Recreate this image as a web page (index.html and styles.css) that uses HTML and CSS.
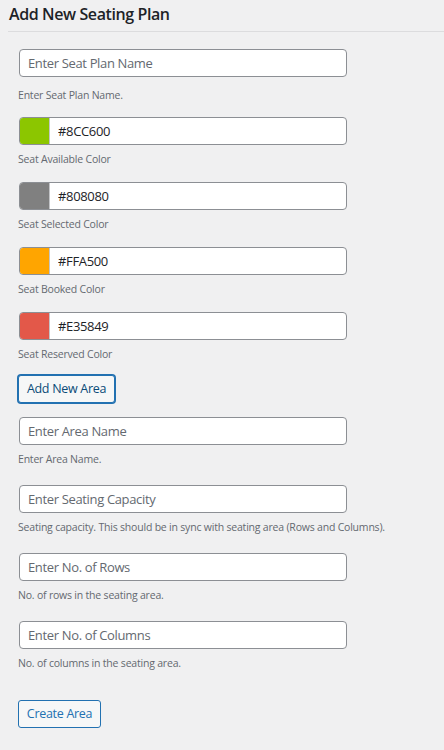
FILE: index.html
```html
<!DOCTYPE html>
<html lang="en">
<head>
<meta charset="utf-8">
<title>Add New Seating Plan</title>
<link rel="stylesheet" href="styles.css">
</head>
<body>
<div class="page">
  <header class="head">
    <h1 class="title">Add New Seating Plan</h1>
  </header>
  <form class="form">
    <div class="field field--first">
      <input class="text" type="text" placeholder="Enter Seat Plan Name">
      <p class="desc desc--first">Enter Seat Plan Name.</p>
    </div>
    <div class="field field--color">
      <div class="color"><span class="swatch" style="background:#8CC600"></span><input class="color-text" type="text" value="#8CC600"></div>
      <p class="desc">Seat Available Color</p>
    </div>
    <div class="field field--color">
      <div class="color"><span class="swatch" style="background:#808080"></span><input class="color-text" type="text" value="#808080"></div>
      <p class="desc">Seat Selected Color</p>
    </div>
    <div class="field field--color">
      <div class="color"><span class="swatch" style="background:#FFA500"></span><input class="color-text" type="text" value="#FFA500"></div>
      <p class="desc">Seat Booked Color</p>
    </div>
    <div class="field field--color field--last-color">
      <div class="color"><span class="swatch" style="background:#E35849"></span><input class="color-text" type="text" value="#E35849"></div>
      <p class="desc">Seat Reserved Color</p>
    </div>
    <button class="btn btn--focus" type="button">Add New Area</button>
    <div class="field field--area">
      <input class="text" type="text" placeholder="Enter Area Name">
      <p class="desc">Enter Area Name.</p>
    </div>
    <div class="field field--area">
      <input class="text" type="text" placeholder="Enter Seating Capacity">
      <p class="desc">Seating capacity. This should be in sync with seating area (Rows and Columns).</p>
    </div>
    <div class="field field--area">
      <input class="text" type="text" placeholder="Enter No. of Rows">
      <p class="desc">No. of rows in the seating area.</p>
    </div>
    <div class="field field--area">
      <input class="text" type="text" placeholder="Enter No. of Columns">
      <p class="desc">No. of columns in the seating area.</p>
    </div>
    <button class="btn btn--outline" type="button">Create Area</button>
  </form>
</div>
</body>
</html>
```

FILE: styles.css
```css
* { box-sizing: border-box; }
html, body {
  margin: 0;
  padding: 0;
  background: #f0f0f1;
}
body {
  font-family: "Open Sans", "Noto Sans", sans-serif;
  color: #1d2327;
}
.page {
  width: 444px;
  height: 750px;
  overflow: hidden;
}
.head {
  margin-left: 8px;
  height: 32px;
  border-bottom: 1px solid #dcdcde;
}
.title {
  margin: 0;
  padding: 4px 0 0 1px;
  font-size: 16px;
  line-height: 20px;
  font-weight: 600;
  letter-spacing: -0.4px;
  color: #1d2327;
}
.form {
  padding: 17px 0 0 18px;
}
.field { margin: 0; }
.text, .color {
  display: block;
  margin-left: 1px;
  width: 328px;
  height: 28px;
  border: 1px solid #8c8f94;
  border-radius: 4px;
  background: #fff;
}
.text {
  padding: 0 8px;
  font-family: inherit;
  font-size: 13px;
  letter-spacing: -0.35px;
  color: #2c3338;
  outline: none;
}
.text::placeholder { color: #646970; opacity: 1; }
.color {
  display: flex;
  overflow: hidden;
}
.swatch {
  width: 30px;
  flex: none;
  border-right: 1px solid #c3c4c7;
}
.color-text {
  flex: 1;
  min-width: 0;
  border: 0;
  padding: 0 8px;
  font-family: inherit;
  font-size: 13px;
  letter-spacing: -0.35px;
  color: #1d2327;
  background: transparent;
  outline: none;
}
.desc {
  margin: 6px 0 0;
  font-size: 10.5px;
  letter-spacing: -0.2px;
  line-height: 16px;
  color: #646970;
  white-space: nowrap;
}
.desc--first { margin-top: 10px; }
.field--first { margin-bottom: 14px; }
.field--color { margin-bottom: 15px; }
.field--last-color { margin-bottom: 13px; }
.field--area { margin: 14px 0 0; }
.field--area + .field--area { margin-top: 18px; }
.btn {
  display: block;
  height: 28px;
  padding: 0;
  border-radius: 3px;
  background: #f6f7f7;
  font-family: inherit;
  font-size: 12.5px;
  letter-spacing: -0.3px;
  line-height: 26px;
  text-align: center;
  white-space: nowrap;
  cursor: pointer;
}
.btn--focus {
  border: 1px solid #2271b1;
  box-shadow: 0 0 0 1px #2271b1;
  color: #0a4b78;
  width: 97px;
}
.btn--outline {
  margin-top: 29px;
  border: 1px solid #2271b1;
  color: #2271b1;
  width: 83px;
}
```
